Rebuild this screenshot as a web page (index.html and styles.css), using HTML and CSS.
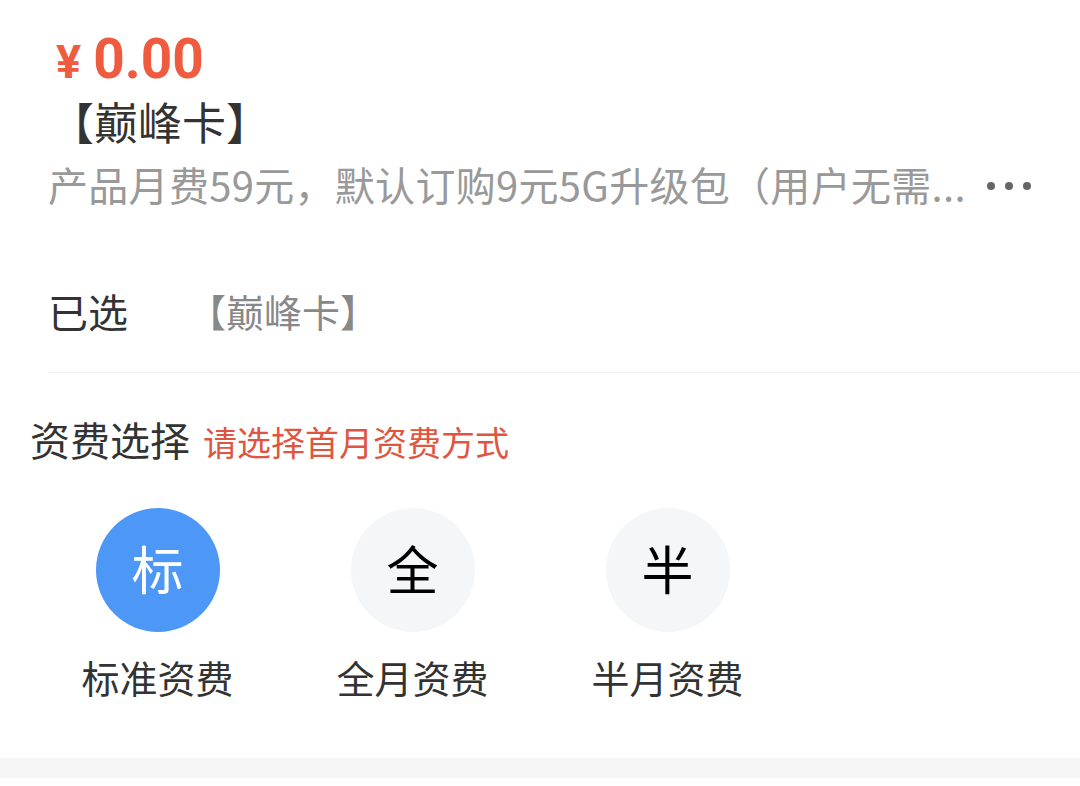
FILE: index.html
```html
<!DOCTYPE html>
<html lang="zh-CN">
<head>
  <meta charset="UTF-8" />
  <title>巅峰卡</title>
  <link rel="stylesheet" href="styles.css">
</head>
<body>

<!-- Product summary -->
<section class="product">
  <div class="price"><span class="currency">¥</span>0.00</div>
  <div class="product-name">【巅峰卡】</div>
  <div class="desc">
    <span class="desc-text">产品月费59元，默认订购9元5G升级包（用户无需...</span>
    <span class="more"><i></i><i></i><i></i></span>
  </div>
</section>

<!-- Selected -->
<div class="selected">
  <span class="selected-label">已选</span>
  <span class="selected-value">【巅峰卡】</span>
</div>

<!-- Fee choice -->
<section class="fee">
  <div class="fee-title">资费选择 <span class="fee-hint">请选择首月资费方式</span></div>
  <div class="fee-options">
    <div class="fee-option active">
      <div class="fee-circle">标</div>
      <div class="fee-name">标准资费</div>
    </div>
    <div class="fee-option">
      <div class="fee-circle">全</div>
      <div class="fee-name">全月资费</div>
    </div>
    <div class="fee-option">
      <div class="fee-circle">半</div>
      <div class="fee-name">半月资费</div>
    </div>
  </div>
</section>

<div class="band"></div>

</body>
</html>
```

FILE: styles.css
```css
body {
  margin: 0;
  background: #fff;
  font-family: "Noto Sans CJK SC", "Noto Sans", sans-serif;
  color: #333;
}
.product {
  padding: 29px 0 0 48px;
}
.price {
  font-family: Roboto, "Noto Sans", sans-serif;
  font-weight: bold;
  font-size: 55px;
  line-height: 60px;
  color: #ef5b3f;
  padding-left: 8px;
}
.currency {
  font-size: 47px;
  margin-right: 12px;
}
.product-name {
  margin-top: 4px;
  font-size: 44px;
  line-height: 50px;
  color: #333;
  margin-left: 2px;
}
.desc {
  margin-top: 14px;
  display: flex;
  align-items: center;
  font-size: 40px;
  letter-spacing: 0.3px;
  line-height: 48px;
  color: #999;
}
.more {
  display: flex;
  gap: 10px;
  margin-left: 21px;
  padding-top: 4px;
}
.more i {
  width: 8px;
  height: 8px;
  border-radius: 50%;
  background: #666;
}
.selected {
  margin: 75px 0 0 48px;
  padding-bottom: 33px;
  border-bottom: 1px solid #eee;
  display: flex;
  align-items: center;
  line-height: 56px;
}
.selected-label {
  font-size: 40px;
  color: #333;
  width: 140px;
}
.selected-value {
  font-size: 38px;
  color: #888;
}
.fee {
  padding: 41px 0 0 30px;
}
.fee-title {
  font-size: 40px;
  line-height: 50px;
  color: #333;
}
.fee-hint {
  font-size: 34px;
  color: #e0553f;
  margin-left: 4px;
}
.fee-options {
  display: flex;
  margin-top: 41px;
}
.fee-option {
  width: 255px;
  display: flex;
  flex-direction: column;
  align-items: center;
}
.fee-circle {
  width: 124px;
  height: 124px;
  border-radius: 50%;
  background: #f5f6f8;
  color: #000;
  font-size: 52px;
  line-height: 1;
  padding-bottom: 4px;
  box-sizing: border-box;
  display: flex;
  align-items: center;
  justify-content: center;
}
.fee-option.active .fee-circle {
  background: #4d97f7;
  color: #fff;
}
.fee-name {
  margin-top: 21px;
  font-size: 38px;
  line-height: 48px;
  color: #333;
}
.band {
  margin-top: 57px;
  height: 20px;
  background: #f5f5f5;
}
```
